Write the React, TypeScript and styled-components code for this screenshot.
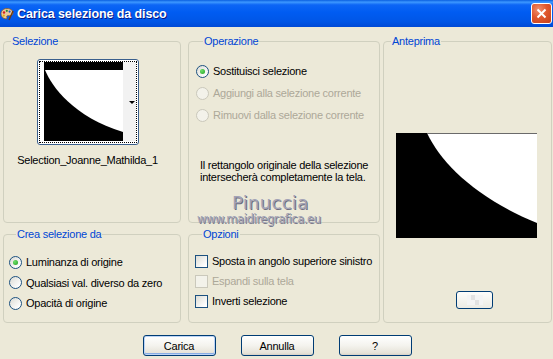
import React from "react";
import styled, { createGlobalStyle } from "styled-components";

const GlobalStyle = createGlobalStyle`
  html, body {
    margin: 0;
    padding: 0;
    background: #ece9d8;
  }
  body {
    font-family: Tahoma, "Liberation Sans", Arial, sans-serif;
    font-size: 11px;
    letter-spacing: -0.25px;
    color: #000;
  }
`;

const Window = styled.div`
  position: relative;
  width: 553px;
  height: 359px;
  overflow: hidden;
  background: #ece9d8;
`;

const TitleBar = styled.div`
  height: 27px;
  display: flex;
  align-items: center;
  background: linear-gradient(
    to bottom,
    #0a5fe0 0%,
    #3d98ff 8%,
    #0d66f5 18%,
    #005cf2 45%,
    #0056e6 80%,
    #004ad6 100%
  );
`;

const TitleIcon = styled.svg`
  width: 14px;
  height: 14px;
  margin: 0 3px 0 0;
  flex: none;
`;

const TitleText = styled.div`
  flex: 1;
  color: #fff;
  font-family: "Liberation Sans", Arial, sans-serif;
  font-weight: 700;
  font-size: 12.5px;
  letter-spacing: -0.1px;
  text-shadow: 1px 1px 0 #0a1883;
`;

const CloseButton = styled.div`
  width: 21px;
  height: 21px;
  box-sizing: border-box;
  margin-right: 1px;
  border: 1px solid #fff;
  border-radius: 3px;
  background: radial-gradient(circle at 35% 30%, #f09070 0%, #e0582e 45%, #c4401a 100%);
  display: flex;
  align-items: center;
  justify-content: center;
`;

const Body = styled.div`
  padding: 8px 1px 0 3px;
`;

const Columns = styled.div`
  display: flex;
  align-items: flex-start;
`;

const Column = styled.div<{ $w: number; $ml?: number }>`
  width: ${(p) => p.$w}px;
  margin-left: ${(p) => p.$ml ?? 0}px;
  display: flex;
  flex-direction: column;
  gap: 5px;
`;

const Group = styled.fieldset<{ $h: number; $pl?: number; $pt?: number }>`
  margin: 0;
  padding: ${(p) => p.$pt ?? 0}px 0 0 ${(p) => p.$pl ?? 0}px;
  min-width: 0;
  height: ${(p) => p.$h}px;
  box-sizing: border-box;
  border: 1px solid #d0d0bf;
  border-radius: 4px;
`;

const Legend = styled.legend`
  color: #0046d5;
  padding: 0 1px;
  margin-left: 7px;
  line-height: 13px;
  font-size: 11px;
`;

const Row = styled.div<{ $h: number; $disabled?: boolean }>`
  height: ${(p) => p.$h}px;
  display: flex;
  align-items: center;
  gap: 4px;
  white-space: nowrap;
  color: ${(p) => (p.$disabled ? "#aca899" : "#000")};
`;

const RadioCircle = styled.span<{ $checked?: boolean; $disabled?: boolean }>`
  width: 13px;
  height: 13px;
  flex: none;
  box-sizing: border-box;
  border-radius: 50%;
  border: 1px solid ${(p) => (p.$disabled ? "#cac8bb" : "#1c5180")};
  background: ${(p) =>
    p.$disabled ? "#f3f2ea" : "linear-gradient(135deg, #dcdcd5 0%, #ffffff 85%)"};
  display: flex;
  align-items: center;
  justify-content: center;
  &::after {
    content: "";
    width: 5px;
    height: 5px;
    border-radius: 50%;
    background: radial-gradient(circle at 35% 35%, #6ee06a, #21a121);
    display: ${(p) => (p.$checked ? "block" : "none")};
  }
`;

const CheckBox = styled.span<{ $disabled?: boolean }>`
  width: 13px;
  height: 13px;
  flex: none;
  box-sizing: border-box;
  border: 1px solid ${(p) => (p.$disabled ? "#cac8bb" : "#1c5180")};
  background: ${(p) =>
    p.$disabled ? "#f3f2ea" : "linear-gradient(135deg, #dcdcd5 0%, #ffffff 85%)"};
`;

const Note = styled.div`
  margin: 33px 0 0 4px;
  line-height: 12px;
`;

const SelContent = styled.div`
  display: flex;
  flex-direction: column;
  align-items: center;
  padding: 11px 9px 0 0;
`;

const ThumbBox = styled.div`
  position: relative;
  width: 102px;
  height: 86px;
  box-sizing: border-box;
  border: 1px solid #3a5f8c;
  border-radius: 3px;
  background: #fff;
  display: flex;
  align-items: flex-start;
  padding: 2px 0 0 6px;
  &::after {
    content: "";
    position: absolute;
    inset: 1px;
    border: 1px dotted #000;
  }
`;

const ThumbSide = styled.div`
  width: 12px;
  height: 79px;
  background: #f2f2f2;
  display: flex;
  align-items: center;
  justify-content: flex-end;
  padding-right: 1px;
`;

const Arrow = styled.span`
  width: 0;
  height: 0;
  border-left: 3px solid transparent;
  border-right: 3px solid transparent;
  border-top: 3px solid #000;
  margin-top: 2px;
`;

const SelName = styled.div`
  margin-top: 9px;
  line-height: 13px;
`;

const PreviewContent = styled.div`
  display: flex;
  flex-direction: column;
  padding-top: 85px;
`;

const PreviewImage = styled.svg`
  display: block;
  margin-left: 12px;
`;

const SmallButton = styled.div`
  width: 37px;
  height: 18px;
  box-sizing: border-box;
  margin: 53px 0 0 72px;
  border: 1px solid #003c74;
  border-radius: 3px;
  background: linear-gradient(to bottom, #fdfdfb, #ecebe4);
  display: flex;
  align-items: center;
  justify-content: center;
`;

const ButtonRow = styled.div`
  display: flex;
  justify-content: center;
  gap: 25px;
  margin-top: 12px;
  padding-right: 1px;
`;

const Button = styled.div<{ $default?: boolean }>`
  width: 73px;
  height: 21px;
  box-sizing: border-box;
  border: 1px solid #003c74;
  border-radius: 3px;
  background: linear-gradient(to bottom, #ffffff 0%, #f4f3ee 50%, #e6e3d8 90%, #d6d0c5 100%);
  box-shadow: ${(p) =>
    p.$default ? "inset 0 0 0 1px #bcd4f6, inset 0 -1px 0 1px #89ade4" : "none"};
  display: flex;
  align-items: center;
  justify-content: center;
`;

const Watermark = styled.div`
  position: absolute;
  left: 197px;
  top: 193px;
  display: flex;
  flex-direction: column;
  align-items: flex-start;
  color: #a3a3b6;
  font-family: "DejaVu Sans", sans-serif;
  pointer-events: none;
`;

const WmName = styled.span`
  margin-left: 35px;
  font-size: 18px;
  line-height: 20px;
  letter-spacing: 0.3px;
  text-shadow: 1px 1px 0 #6e6e80;
`;

const WmSite = styled.span`
  font-size: 11.5px;
  line-height: 13px;
  letter-spacing: -0.4px;
  text-shadow: 1px 1px 0 #7a7a8a;
`;

const Radio = ({
  label,
  checked,
  disabled,
  h = 22,
}: {
  label: string;
  checked?: boolean;
  disabled?: boolean;
  h?: number;
}) => (
  <Row $disabled={disabled} $h={h}>
    <RadioCircle $checked={checked} $disabled={disabled} />
    {label}
  </Row>
);

const Check = ({ label, disabled }: { label: string; disabled?: boolean }) => (
  <Row $disabled={disabled} $h={20}>
    <CheckBox $disabled={disabled} />
    {label}
  </Row>
);

export default function App() {
  return (
    <Window>
      <GlobalStyle />
      <TitleBar>
        <TitleIcon viewBox="0 0 14 14">
          <path
            d="M7 1.5C3.5 1.5 1 3.8 1 6.8c0 2.8 2.3 5 4.8 5 1.2 0 1.4-.8 1-1.6-.4-.8.1-1.5 1.1-1.5h1.6c2.1 0 3.5-1.3 3.5-3C13 3.4 10.4 1.5 7 1.5z"
            fill="#e8c89a"
            stroke="#8a5a2a"
            strokeWidth="0.8"
          />
          <circle cx="4" cy="5.5" r="1.2" fill="#d62020" />
          <circle cx="6.8" cy="3.8" r="1.1" fill="#2a8a2a" />
          <circle cx="9.6" cy="4.6" r="1.1" fill="#2050d0" />
          <circle cx="3.8" cy="8.6" r="1.1" fill="#e0b000" />
          <path d="M9 13l4-9" stroke="#6a3a10" strokeWidth="1.4" />
        </TitleIcon>
        <TitleText>Carica selezione da disco</TitleText>
        <CloseButton>
          <svg width="11" height="11" viewBox="0 0 11 11">
            <path d="M1.5 1.5l8 8M9.5 1.5l-8 8" stroke="#fff" strokeWidth="2" />
          </svg>
        </CloseButton>
      </TitleBar>
      <Body>
        <Columns>
          <Column $w={178}>
            <Group $h={188}>
              <Legend>Selezione</Legend>
              <SelContent>
                <ThumbBox>
                  <svg width="79" height="79" viewBox="0 0 79 79">
                    <rect width="79" height="79" fill="#000" />
                    <path d="M1 8 C 8 25 30 55 79 70 V8 Z" fill="#fff" />
                  </svg>
                  <ThumbSide>
                    <Arrow />
                  </ThumbSide>
                </ThumbBox>
                <SelName>Selection_Joanne_Mathilda_1</SelName>
              </SelContent>
            </Group>
            <Group $h={95} $pl={5} $pt={11}>
              <Legend>Crea selezione da</Legend>
              <Radio label="Luminanza di origine" checked h={20.5} />
              <Radio label="Qualsiasi val. diverso da zero" h={20.5} />
              <Radio label="Opacità di origine" h={20.5} />
            </Group>
          </Column>
          <Column $w={192} $ml={7}>
            <Group $h={188} $pl={7} $pt={12}>
              <Legend>Operazione</Legend>
              <Radio label="Sostituisci selezione" checked />
              <Radio label="Aggiungi alla selezione corrente" disabled />
              <Radio label="Rimuovi dalla selezione corrente" disabled />
              <Note>
                Il rettangolo originale della selezione
                <br />
                intersecherà completamente la tela.
              </Note>
            </Group>
            <Group $h={95} $pl={6} $pt={10}>
              <Legend>Opzioni</Legend>
              <Check label="Sposta in angolo superiore sinistro" />
              <Check label="Espandi sulla tela" disabled />
              <Check label="Inverti selezione" />
            </Group>
          </Column>
          <Column $w={169} $ml={3}>
            <Group $h={288}>
              <Legend>Anteprima</Legend>
              <PreviewContent>
                <PreviewImage width="141" height="105" viewBox="0 0 141 105">
                  <rect width="141" height="105" fill="#000" />
                  <path d="M31 0 C 45 30 80 65 141 90 V0 Z" fill="#fff" />
                  <line x1="31" y1="0.5" x2="141" y2="0.5" stroke="#6a6a6a" />
                </PreviewImage>
                <SmallButton>
                  <svg width="16" height="10" viewBox="0 0 16 10">
                    <rect width="16" height="10" fill="#f4f4f4" />
                    <rect x="4" y="0" width="4" height="5" fill="#e2e2e2" />
                    <rect x="8" y="5" width="4" height="5" fill="#e2e2e2" />
                  </svg>
                </SmallButton>
              </PreviewContent>
            </Group>
          </Column>
        </Columns>
        <ButtonRow>
          <Button $default>Carica</Button>
          <Button>Annulla</Button>
          <Button>?</Button>
        </ButtonRow>
      </Body>
      <Watermark>
        <WmName>Pinuccia</WmName>
        <WmSite>www.maidiregrafica.eu</WmSite>
      </Watermark>
    </Window>
  );
}
